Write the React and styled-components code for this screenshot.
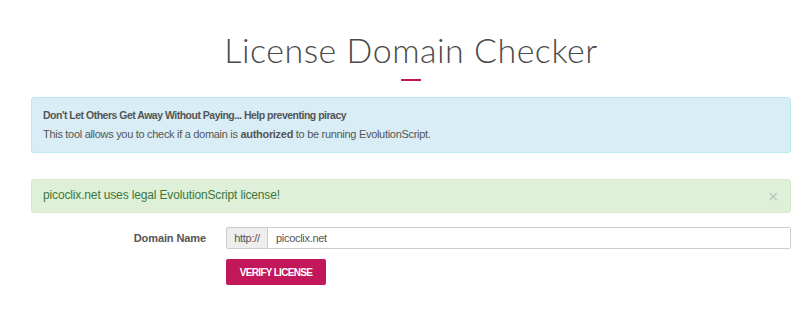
import React from "react";
import styled, { createGlobalStyle } from "styled-components";

const Global = createGlobalStyle`
  html, body { margin: 0; padding: 0; background: #fff; }
  body { font-family: "Liberation Sans", Arial, sans-serif; color: #555; }
  * { box-sizing: border-box; }
`;

const Page = styled.div`
  width: 806px;
  padding: 0 15px 0 31px;
`;

const Header = styled.header`
  display: flex;
  flex-direction: column;
  align-items: center;
  padding-top: 30px;
`;

const Title = styled.h1`
  margin: 0;
  font-family: Lato, "Open Sans", sans-serif;
  font-weight: 300;
  font-size: 34px;
  line-height: 40px;
  color: #4a4a4a;
  letter-spacing: 0.5px;
`;

const Underline = styled.span`
  display: block;
  width: 20px;
  height: 2px;
  background: #c2185b;
  margin-top: 9px;
`;

const Alert = styled.div`
  border: 1px solid ${(p) => p.$border};
  background: ${(p) => p.$bg};
  color: ${(p) => p.$color};
  border-radius: 3px;
  padding: ${(p) => p.$pad};
  position: relative;
`;

const InfoAlert = styled(Alert)`
  margin-top: 16px;
  font-size: 11px;
  letter-spacing: -0.3px;
  line-height: 19px;
`;

const SuccessAlert = styled(Alert)`
  margin-top: 26px;
  font-size: 12px;
  letter-spacing: -0.15px;
  line-height: 17px;
`;

const Strong = styled.div`
  font-weight: 700;
  font-size: 10.5px;
  letter-spacing: -0.5px;
`;

const Close = styled.span`
  position: absolute;
  right: 11px;
  top: 8px;
  font-size: 14px;
  color: #b5c6b3;
  font-family: "DejaVu Sans", sans-serif;
  letter-spacing: 0;
`;

const Form = styled.form`
  display: grid;
  grid-template-columns: 175px 1fr;
  column-gap: 20px;
  row-gap: 10px;
  margin-top: 14px;
  align-items: center;
`;

const Label = styled.label`
  text-align: right;
  font-weight: 700;
  font-size: 11px;
  letter-spacing: -0.1px;
  color: #555;
`;

const InputGroup = styled.div`
  display: flex;
  height: 22px;
`;

const Addon = styled.span`
  display: flex;
  align-items: center;
  justify-content: center;
  width: 42px;
  background: #eee;
  border: 1px solid #ccc;
  border-radius: 2px 0 0 2px;
  font-size: 11px;
  letter-spacing: -0.3px;
  color: #555;
`;

const Input = styled.input`
  flex: 1;
  border: 1px solid #ccc;
  border-left: none;
  border-radius: 0 2px 2px 0;
  padding: 0 8px;
  font-family: inherit;
  font-size: 11px;
  letter-spacing: -0.3px;
  color: #555;
  outline: none;
`;

const Button = styled.button`
  grid-column: 2;
  justify-self: start;
  width: 100px;
  height: 26px;
  background: #c2185b;
  color: #fff;
  border: none;
  border-radius: 2px;
  font-family: inherit;
  font-weight: 700;
  font-size: 10px;
  letter-spacing: -0.7px;
  text-transform: uppercase;
`;

export default function App() {
  return (
    <>
      <Global />
      <Page>
        <Header>
          <Title>License Domain Checker</Title>
          <Underline />
        </Header>
        <InfoAlert $bg="#d9edf7" $border="#bce8f1" $color="#555" $pad="8px 11px 8px">
          <Strong>Don't Let Others Get Away Without Paying... Help preventing piracy</Strong>
          <div>
            This tool allows you to check if a domain is <b>authorized</b> to be running EvolutionScript.
          </div>
        </InfoAlert>
        <SuccessAlert $bg="#dff0d8" $border="#d6e9c6" $color="#3c763d" $pad="7px 11px 8px">
          picoclix.net uses legal EvolutionScript license!
          <Close>×</Close>
        </SuccessAlert>
        <Form onSubmit={(e) => e.preventDefault()}>
          <Label>Domain Name</Label>
          <InputGroup>
            <Addon>http://</Addon>
            <Input defaultValue="picoclix.net" />
          </InputGroup>
          <Button type="submit">Verify License</Button>
        </Form>
      </Page>
    </>
  );
}
